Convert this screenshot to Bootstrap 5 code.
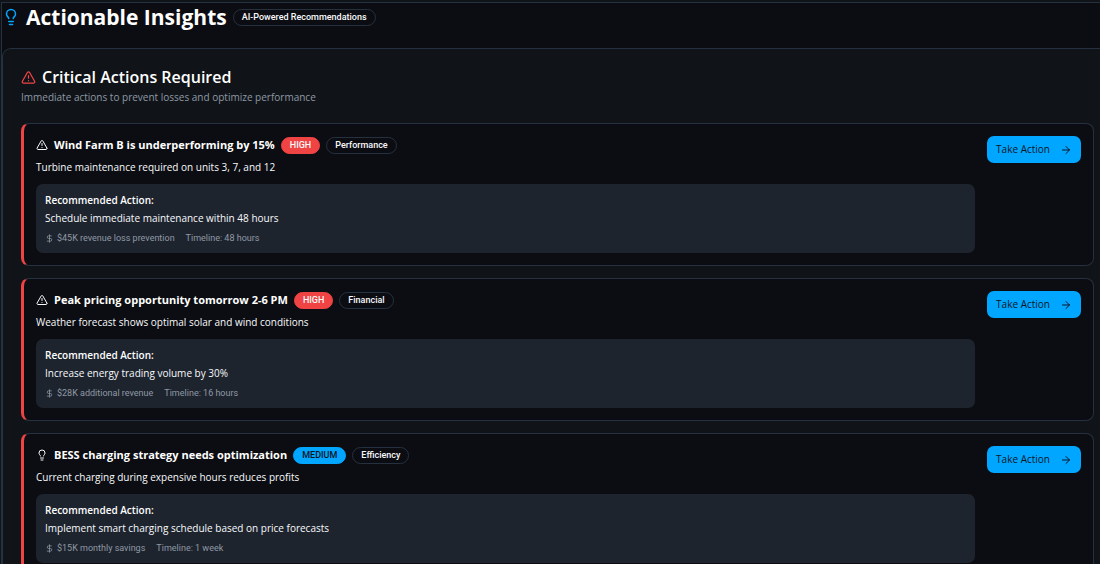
<!DOCTYPE html>
<html lang="en" data-bs-theme="dark">
<head>
<meta charset="utf-8">
<meta name="viewport" content="width=device-width, initial-scale=1">
<title>Actionable Insights</title>
<link href="https://cdn.jsdelivr.net/npm/bootstrap@5.3.0/dist/css/bootstrap.min.css" rel="stylesheet">
<style>
  :root { --line: #26313f; --panel: #101418; --page: #0c0d12; --sky: #00a6ff; --alert: #f04343; --muted: #8f99a5; --ink: #0c1524; }
  body { background: var(--panel); color: #f8fafc; font-family: "Open Sans", sans-serif; font-size: 10px; line-height: 18px; }
  svg { fill: none; stroke: currentColor; stroke-width: 2; stroke-linecap: round; stroke-linejoin: round; flex: none; display: block; }
  .shell { background: var(--page); border: solid var(--line); border-width: 1px 0 0 1px; margin: 2px 0 0 1px; }
  .page-head { height: 45px; }
  .page-head h1 { font-size: 21px; line-height: 28px; font-weight: 700; }
  .row-line { gap: 6px; }
  .sky { color: var(--sky); }
  .alert-ink { color: var(--alert); }
  .panel { background: var(--panel); border: solid var(--line); border-width: 1px 0 0 1px; border-radius: 9px 0 0 0; padding: 17px 6px 18px 18px; }
  .panel h2 { font-size: 16px; line-height: 22px; font-weight: 600; }
  .hint { color: var(--muted); margin-bottom: 17px; }
  .insights { gap: 12px; }
  .insight { background: var(--page); border: 1px solid var(--line); border-left: 3px solid var(--alert); border-radius: 8px; padding: 12px; gap: 12px; }
  .insight h3 { font-size: 11px; line-height: 18px; font-weight: 700; }
  .tag { border: 1px solid var(--line); border-radius: 9px; font-family: Roboto, sans-serif; font-size: 9px; line-height: 15px; font-weight: 500; padding: 0 8px; }
  .tag-high { background: var(--alert); border-color: var(--alert); }
  .tag-medium { background: var(--sky); border-color: var(--sky); color: var(--ink); }
  .desc { margin: 4px 0 8px; }
  .advice { background: #1e242e; border-radius: 7px; padding: 7px 9px; }
  .advice h4 { font-size: 10px; line-height: 18px; font-weight: 600; margin: 0; }
  .meta { color: var(--muted); font-family: Roboto, sans-serif; font-size: 9px; line-height: 16px; gap: 11px; margin-top: 3px; }
  .meta-item { gap: 3px; }
  .btn.act { background: var(--sky); color: var(--ink); border: 0; border-radius: 7px; font-size: 10px; line-height: 15px; padding: 6px 9px; gap: 10px; font-weight: 500; }
  .btn.act:hover { background: #33b8ff; }
</style>
</head>
<body>
<svg width="0" height="0" class="position-absolute" aria-hidden="true">
  <symbol id="warn" viewBox="0 0 24 24"><path d="m21.73 18-8-14a2 2 0 0 0-3.48 0l-8 14A2 2 0 0 0 4 21h16a2 2 0 0 0 1.730-3Z"/><path d="M12 9v4M12 17h.01"/></symbol>
  <symbol id="bulb" viewBox="0 0 24 24"><path d="M15 14c.2-1 .7-1.700 1.500-2.500 1-.9 1.500-2.200 1.500-3.500A6 6 0 0 0 6 8c0 1 .2 2.200 1.500 3.500.7.7 1.300 1.500 1.500 2.500M9 18h6M10 22h4"/></symbol>
  <symbol id="dollar" viewBox="0 0 24 24"><path d="M12 2v20M17 5H9.500a3.500 3.500 0 0 0 0 7h5a3.500 3.500 0 0 1 0 7H6"/></symbol>
  <symbol id="arrow" viewBox="0 0 24 24"><path d="M5 12h14M12 5l7 7-7 7"/></symbol>
</svg>
<main class="shell">
  <header class="page-head">
    <div class="d-flex align-items-center row-line">
      <svg class="sky" width="18" height="18"><use href="#bulb"/></svg>
      <h1 class="m-0">Actionable Insights</h1>
      <span class="tag">AI-Powered Recommendations</span>
    </div>
  </header>
  <section class="panel">
    <div class="d-flex align-items-center row-line">
      <svg class="alert-ink" width="15" height="15"><use href="#warn"/></svg>
      <h2 class="m-0">Critical Actions Required</h2>
    </div>
    <p class="hint">Immediate actions to prevent losses and optimize performance</p>
    <div class="d-flex flex-column insights">
      <article class="insight d-flex align-items-start">
        <div class="flex-grow-1">
          <div class="d-flex align-items-center row-line">
            <svg width="12" height="12"><use href="#warn"/></svg>
            <h3 class="m-0">Wind Farm B is underperforming by 15%</h3>
            <span class="tag tag-high">HIGH</span><span class="tag">Performance</span>
          </div>
          <p class="desc">Turbine maintenance required on units 3, 7, and 12</p>
          <div class="advice">
            <h4>Recommended Action:</h4>
            <p class="m-0">Schedule immediate maintenance within 48 hours</p>
            <div class="meta d-flex"><span class="meta-item d-flex align-items-center"><svg width="9" height="9"><use href="#dollar"/></svg>$45K revenue loss prevention</span><span>Timeline: 48 hours</span></div>
          </div>
        </div>
        <button type="button" class="btn act d-flex align-items-center">Take Action<svg width="12" height="12"><use href="#arrow"/></svg></button>
      </article>
      <article class="insight d-flex align-items-start">
        <div class="flex-grow-1">
          <div class="d-flex align-items-center row-line">
            <svg width="12" height="12"><use href="#warn"/></svg>
            <h3 class="m-0">Peak pricing opportunity tomorrow 2-6 PM</h3>
            <span class="tag tag-high">HIGH</span><span class="tag">Financial</span>
          </div>
          <p class="desc">Weather forecast shows optimal solar and wind conditions</p>
          <div class="advice">
            <h4>Recommended Action:</h4>
            <p class="m-0">Increase energy trading volume by 30%</p>
            <div class="meta d-flex"><span class="meta-item d-flex align-items-center"><svg width="9" height="9"><use href="#dollar"/></svg>$28K additional revenue</span><span>Timeline: 16 hours</span></div>
          </div>
        </div>
        <button type="button" class="btn act d-flex align-items-center">Take Action<svg width="12" height="12"><use href="#arrow"/></svg></button>
      </article>
      <article class="insight d-flex align-items-start">
        <div class="flex-grow-1">
          <div class="d-flex align-items-center row-line">
            <svg width="12" height="12"><use href="#bulb"/></svg>
            <h3 class="m-0">BESS charging strategy needs optimization</h3>
            <span class="tag tag-medium">MEDIUM</span><span class="tag">Efficiency</span>
          </div>
          <p class="desc">Current charging during expensive hours reduces profits</p>
          <div class="advice">
            <h4>Recommended Action:</h4>
            <p class="m-0">Implement smart charging schedule based on price forecasts</p>
            <div class="meta d-flex"><span class="meta-item d-flex align-items-center"><svg width="9" height="9"><use href="#dollar"/></svg>$15K monthly savings</span><span>Timeline: 1 week</span></div>
          </div>
        </div>
        <button type="button" class="btn act d-flex align-items-center">Take Action<svg width="12" height="12"><use href="#arrow"/></svg></button>
      </article>
    </div>
  </section>
</main>
<script src="https://cdn.jsdelivr.net/npm/bootstrap@5.3.0/dist/js/bootstrap.bundle.min.js"></script>
</body>
</html>
